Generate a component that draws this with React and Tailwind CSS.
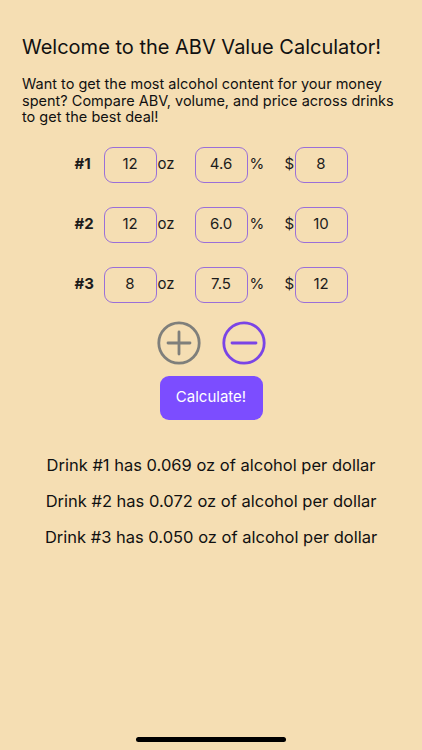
import { useState } from 'react'

const FONT = { fontFamily: 'Inter, "Liberation Sans", sans-serif' }

const initialDrinks = [
  { oz: '12', abv: '4.6', price: '8' },
  { oz: '12', abv: '6.0', price: '10' },
  { oz: '8', abv: '7.5', price: '12' },
]

function Box({ value }) {
  return (
    <div className="w-[53px] h-[36px] rounded-[9px] border-[1.5px] border-[#9a6fd8] flex items-center justify-center text-[15px] text-[#1c1c1c]">
      {value}
    </div>
  )
}

function DrinkRow({ index, drink }) {
  return (
    <div className="flex items-center justify-center h-[36px] text-[15px] text-[#1c1c1c]">
      <span className="w-[29px] font-bold">#{index}</span>
      <Box value={drink.oz} />
      <span className="w-[38px] pl-[1px]">oz</span>
      <Box value={drink.abv} />
      <span className="w-[37px] pl-[2px]">%</span>
      <span className="w-[10px]">$</span>
      <Box value={drink.price} />
    </div>
  )
}

export default function App() {
  const [drinks] = useState(initialDrinks)

  return (
    <div style={FONT} className="h-[750px] w-full bg-[#f5deb3] flex flex-col overflow-hidden">
      <h1 className="px-[22px] pt-[35px] text-[20px] leading-[24px] text-[#111]">
        Welcome to the ABV Value Calculator!
      </h1>
      <p className="px-[22px] mt-[17px] text-[14.5px] leading-[16.5px] text-[#111]">
        Want to get the most alcohol content for your money spent? Compare ABV, volume, and price across drinks to get the best deal!
      </p>

      <div className="mt-[21px] flex flex-col gap-[24px]">
        {drinks.map((d, i) => (
          <DrinkRow key={i} index={i + 1} drink={d} />
        ))}
      </div>

      <div className="mt-[18px] flex justify-center gap-[21px]">
        <button type="button" aria-label="Add drink" className="w-[44px] h-[44px]">
          <svg viewBox="0 0 44 44" className="block w-[44px] h-[44px]" fill="none" stroke="#7f7f7b" strokeWidth="2.8" strokeLinecap="round">
            <circle cx="22" cy="22" r="20.2" />
            <path d="M22 11v22M11 22h22" />
          </svg>
        </button>
        <button type="button" aria-label="Remove drink" className="w-[44px] h-[44px]">
          <svg viewBox="0 0 44 44" className="block w-[44px] h-[44px]" fill="none" stroke="#7a44e6" strokeWidth="2.8" strokeLinecap="round">
            <circle cx="22" cy="22" r="20.2" />
            <path d="M10 22h24" />
          </svg>
        </button>
      </div>

      <div className="mt-[11px] flex justify-center">
        <button type="button" className="w-[103px] h-[44px] rounded-[9px] bg-[#7c4dff] text-white text-[15px]">
          Calculate!
        </button>
      </div>

      <div className="mt-[35px] flex flex-col items-center gap-[16px] text-[16.5px] leading-[20px] text-[#111]">
        <p>Drink #1 has 0.069 oz of alcohol per dollar</p>
        <p>Drink #2 has 0.072 oz of alcohol per dollar</p>
        <p>Drink #3 has 0.050 oz of alcohol per dollar</p>
      </div>

      <div className="mt-auto mb-[8px] flex justify-center">
        <div className="w-[150px] h-[5px] rounded-full bg-black" />
      </div>
    </div>
  )
}
